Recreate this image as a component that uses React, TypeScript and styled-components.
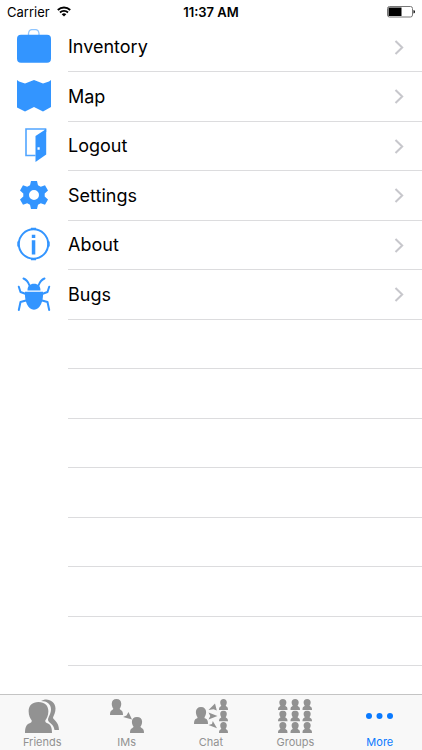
import React from "react";
import styled, { createGlobalStyle } from "styled-components";

const GlobalStyle = createGlobalStyle`
  *, *::before, *::after { box-sizing: border-box; }
  body {
    margin: 0;
    background: #fff;
    color: #000;
    font-family: Inter, "Liberation Sans", sans-serif;
  }
`;

const BLUE = "#3395ff";

const Screen = styled.div`
  display: flex;
  flex-direction: column;
  height: 100vh;
`;

const StatusBar = styled.header`
  display: grid;
  grid-template-columns: 1fr auto 1fr;
  align-items: center;
  height: 23px;
  flex: none;
  padding: 0 7px;
  font-size: 13px;
  line-height: 16px;
`;

const Carrier = styled.div`
  display: flex;
  align-items: center;
  gap: 7px;
`;

const Clock = styled.time`
  font-weight: 600;
`;

const BatterySlot = styled.div`
  display: flex;
  justify-content: flex-end;
`;

const Menu = styled.ul`
  flex: 1;
  min-height: 0;
  margin: 0;
  padding: 0;
  list-style: none;
  overflow: hidden auto;
  scrollbar-width: none;
`;

const MenuRow = styled.li`
  display: flex;
  height: 49px;
  &:nth-child(even) { height: 50px; }
`;

const MenuLink = styled.a`
  display: flex;
  flex: 1;
  color: inherit;
  text-decoration: none;
`;

const IconSlot = styled.span`
  display: flex;
  align-items: center;
  justify-content: center;
  width: 68px;
  flex: none;
  padding-bottom: 3px;
  color: ${BLUE};
`;

const RowBody = styled.span`
  display: flex;
  flex: 1;
  align-items: center;
  justify-content: space-between;
  padding-right: 18px;
  border-bottom: 1px solid #dcdcde;
  font-size: 18px;
  line-height: 24px;
`;

const TabBar = styled.nav`
  display: grid;
  grid-template-columns: repeat(5, 1fr);
  height: 56px;
  flex: none;
  background: #f8f8f8;
  border-top: 1px solid #c4c4c4;
`;

const Tab = styled.button<{ $active?: boolean }>`
  display: flex;
  flex-direction: column;
  align-items: center;
  gap: 2px;
  padding: 4px 0 0;
  border: 0;
  background: none;
  color: ${(p) => (p.$active ? "#0a7aff" : "#929292")};
  font: inherit;
  font-size: 11px;
  line-height: 14px;
`;

const Drawing = ({ children }: { children: React.ReactNode }) => (
  <svg width="34" height="34" viewBox="0 0 34 34" fill="currentColor" aria-hidden="true">
    {children}
  </svg>
);

const Briefcase = () => (
  <Drawing>
    <path d="M11.5 6V4.5Q12 .6 15 .6h3.500Q21.500.6 22 4.500V6" fill="none" stroke="currentColor" strokeWidth="1.300" opacity=".55" />
    <rect x="0" y="5.800" width="34" height="28" rx="4" />
  </Drawing>
);

const MapIcon = () => (
  <Drawing>
    <path d="M0 1 2 2.500 8 4.500 17 1l9 3.500 6-2 2-1.500v27l-8 4.500-9-4.500-9 4.500-8-4z" />
  </Drawing>
);

const Door = () => (
  <Drawing>
    <path d="M18.500 27.500H9V1h19.500v3" fill="none" stroke="currentColor" strokeWidth="1.600" opacity=".85" />
    <path fillRule="evenodd" d="M18.500 8 29.200 1v25.500l-10.700 7.500zM20.500 19.200v2.600h2.200v-2.600z" />
  </Drawing>
);

const GearIcon = () => (
  <Drawing>
    <path
      fillRule="evenodd"
      d="M14 3h6l1 4.200 2.800 1.600 4.200-1.500 3 5.200-3.300 3v3l3.300 3-3 5.200-4.200-1.500-2.800 1.600-1 4.200h-6l-1-4.200-2.800-1.600L6 26.700l-3-5.200 3.300-3v-3L3 12.500l3-5.200 4.200 1.500L13 7.200zM17 12a5 5 0 1 0 0 10 5 5 0 0 0 0-10z"
    />
  </Drawing>
);

const Info = () => (
  <Drawing>
    <circle cx="16.500" cy="17" r="14.700" fill="none" stroke="currentColor" strokeWidth="2" />
    <path d="M14 .8h5v2h-5zM14 31.200h5v2h-5zM.3 14.500h2v5h-2zM30.700 14.500h2v5h-2zM14.800 7.700h3.500V11h-3.500zM14.800 13.300h3.500v14.200h-3.500z" />
  </Drawing>
);

const Bug = () => (
  <Drawing>
    <path d="M10.500 13.500C10.500 9 13 6.800 17 6.800s6.500 2.200 6.500 6.700zM8 14.800h18c.8 9-3 18-9 18s-9.800-9-9-18z" />
    <path
      d="M12.500 8.500Q10.500 3 6.500 1.500M21.500 8.500Q23.500 3 27.500 1.500M9 17 3.500 15 1.800 9.800M25 17l5.500-2 1.700-5.200M9 23.500l-5.500 1.500-1.700 8M25 23.500l5.500 1.500 1.700 8"
      fill="none"
      stroke="currentColor"
      strokeWidth="2"
      strokeLinecap="round"
      strokeLinejoin="round"
    />
  </Drawing>
);

const Person = ({ x, y, w, h }: { x: number; y: number; w: number; h: number }) => (
  <svg x={x} y={y} width={w} height={h} viewBox="0 0 26 30" preserveAspectRatio="none">
    <path d="M13 0C19 0 22.500 3.500 22.500 9c0 4-1.500 7-3 9 0 1.500.5 2 2 2.500 3.500 1.200 4.500 4.500 4.500 9.500H0c0-5 1-8.300 4.500-9.500 1.500-.5 2-1 2-2.500-1.500-2-3-5-3-9C3.500 3.500 7 0 13 0z" />
  </svg>
);

const Friends = () => (
  <Drawing>
    <path d="M16 2C22-2 30.500 2 30.500 9.500c0 4-1.500 6.500-2.500 9 0 2.500 6 4 6 12.500h-4.500c-1-6.500-6-7-6.500-10 0-3 3-6 3-10.500C26 5 22 2 16 2z" />
    <Person x={0} y={3} w={27} h={31} />
  </Drawing>
);

const Messages = () => (
  <Drawing>
    <Person x={0} y={0} w={13} h={16} />
    <Person x={20} y={18} w={14} h={16} />
    <path d="m13 18 3.500-1.500L18.500 13l3.500 7.500z" />
  </Drawing>
);

const Chat = () => (
  <Drawing>
    <Person x={0} y={8} w={14} h={17} />
    {[0, 11.500, 23].map((y) => <Person key={y} x={25} y={y} w={9} h={11} />)}
    <path d="m14.500 11 6.500-6.500 1.800 7-3.300-1.200zM14.500 13.500l9 3.500-9 3.500 1.800-3.500zM14.500 26l3.500-1 .8-3L23 29.300z" />
  </Drawing>
);

const Groups = () => (
  <Drawing>
    {[0, 11.500, 23].map((y) =>
      [0, 12.300, 24.300].map((x) => <Person key={`${x}-${y}`} x={x} y={y} w={9.700} h={11} />)
    )}
  </Drawing>
);

const More = () => (
  <Drawing>
    <circle cx="6" cy="17" r="3" />
    <circle cx="16.500" cy="17" r="3" />
    <circle cx="27" cy="17" r="3" />
  </Drawing>
);

const Wifi = () => (
  <svg width="14" height="11" viewBox="0 0 14 11" aria-label="Wi-Fi">
    <path d="M.8 4a9 9 0 0 1 12.400 0M3 6.500a5.800 5.800 0 0 1 8 0" fill="none" stroke="#000" strokeWidth="1.900" />
    <path d="M4.700 8.200a3.500 3.500 0 0 1 4.600 0L7 10.500z" />
  </svg>
);

const Battery = () => (
  <svg width="28" height="12" viewBox="0 0 28 12" aria-label="Battery">
    <rect x=".5" y=".5" width="25" height="10.500" rx="2" fill="#fff" stroke="#777" />
    <path d="M1.500 1.500H14.500V10H1.500z" />
    <path d="M26.500 4q1.500.3 1.500 1.800T26.500 7.600z" />
  </svg>
);

const Chevron = () => (
  <svg width="10" height="15" viewBox="0 0 10 15" fill="none" stroke="#c7c7cc" strokeWidth="2" aria-hidden="true">
    <path d="m1.500 1 6.700 6.500L1.500 14" />
  </svg>
);

const items = [
  { label: "Inventory", icon: <Briefcase /> },
  { label: "Map", icon: <MapIcon /> },
  { label: "Logout", icon: <Door /> },
  { label: "Settings", icon: <GearIcon /> },
  { label: "About", icon: <Info /> },
  { label: "Bugs", icon: <Bug /> },
];

const tabs = [
  { label: "Friends", icon: <Friends /> },
  { label: "IMs", icon: <Messages /> },
  { label: "Chat", icon: <Chat /> },
  { label: "Groups", icon: <Groups /> },
  { label: "More", icon: <More />, active: true },
];

const EMPTY_ROWS = 7;

export default function App() {
  return (
    <Screen>
      <GlobalStyle />
      <StatusBar>
        <Carrier>
          Carrier
          <Wifi />
        </Carrier>
        <Clock>11:37 AM</Clock>
        <BatterySlot>
          <Battery />
        </BatterySlot>
      </StatusBar>
      <Menu>
        {items.map(({ label, icon }) => (
          <MenuRow key={label}>
            <MenuLink href={`#${label.toLowerCase()}`}>
              <IconSlot>{icon}</IconSlot>
              <RowBody>
                {label}
                <Chevron />
              </RowBody>
            </MenuLink>
          </MenuRow>
        ))}
        {Array.from({ length: EMPTY_ROWS }, (_, i) => (
          <MenuRow key={i} aria-hidden="true">
            <IconSlot />
            <RowBody />
          </MenuRow>
        ))}
      </Menu>
      <TabBar>
        {tabs.map(({ label, icon, active }) => (
          <Tab key={label} type="button" $active={active} aria-current={active ? "page" : undefined}>
            {icon}
            {label}
          </Tab>
        ))}
      </TabBar>
    </Screen>
  );
}
